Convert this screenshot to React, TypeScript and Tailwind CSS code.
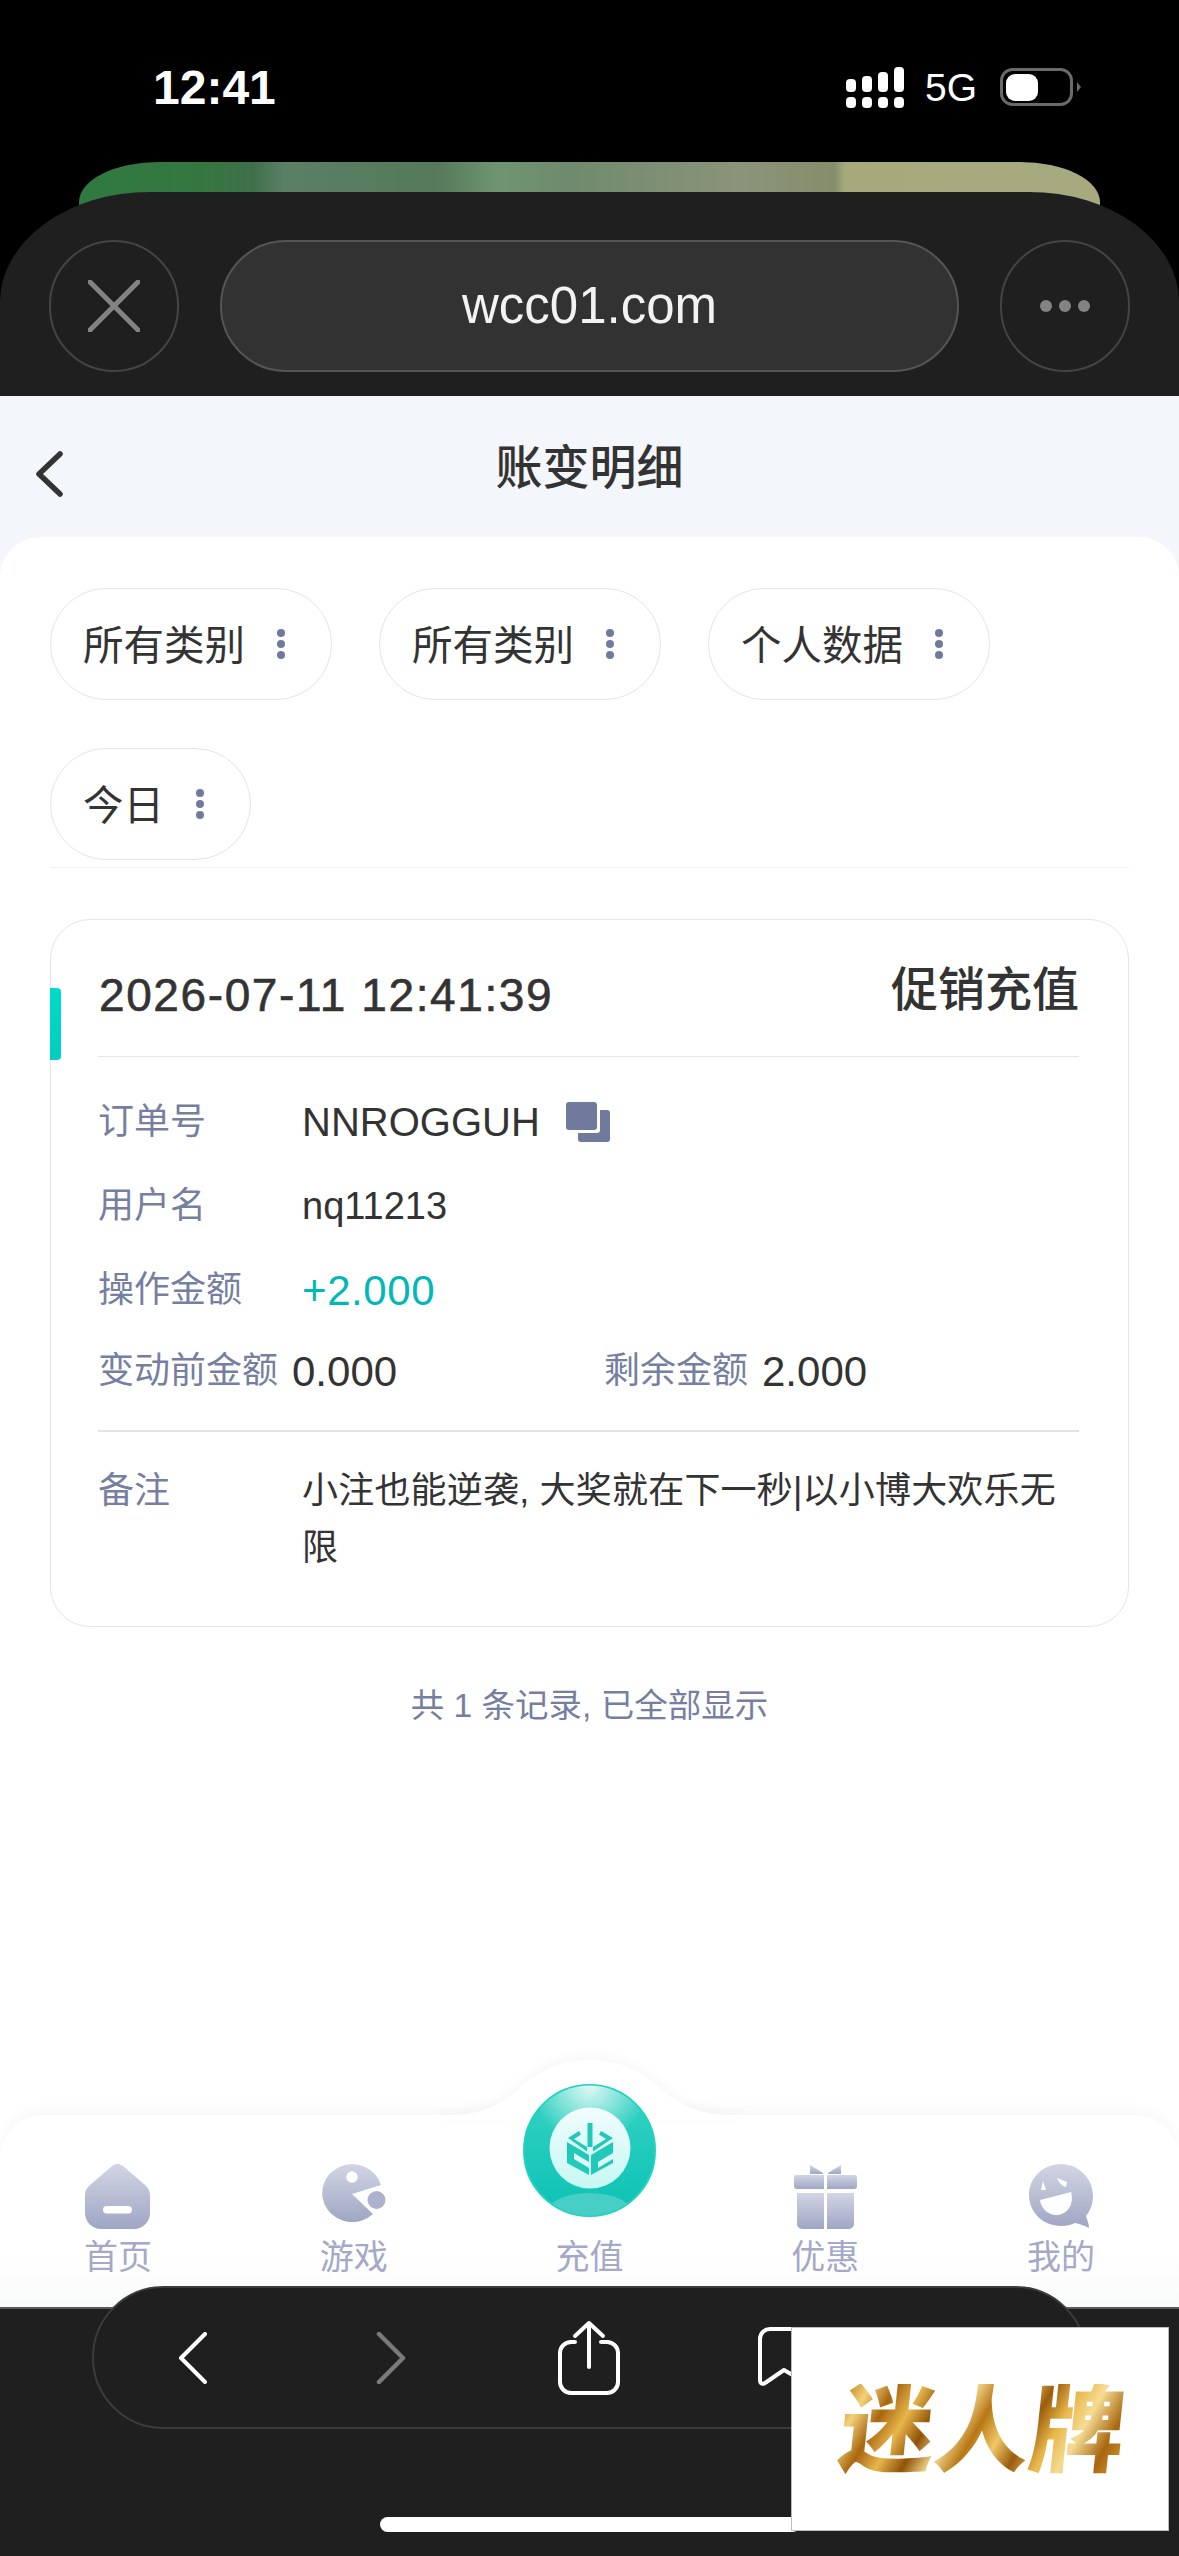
const navGradient = (id: string) => (
  <defs>
    <linearGradient id={id} x1="0" y1="0" x2="0" y2="1">
      <stop offset="0%" stopColor="#d2d5e4" />
      <stop offset="100%" stopColor="#9fa6c4" />
    </linearGradient>
  </defs>
);

// ---------------------------------------------------------------------------
// Icons
// ---------------------------------------------------------------------------

function SignalIcon() {
  return (
    <svg width="58" height="41" viewBox="0 0 58 41" fill="#fff">
      <rect x="0" y="12" width="10" height="13" rx="4" />
      <rect x="16" y="9" width="10" height="16" rx="4" />
      <rect x="32" y="5" width="10" height="20" rx="4" />
      <rect x="48" y="0" width="10" height="25" rx="4" />
      <rect x="0" y="30" width="10" height="11" rx="4" />
      <rect x="16" y="30" width="10" height="11" rx="4" />
      <rect x="32" y="30" width="10" height="11" rx="4" />
      <rect x="48" y="30" width="10" height="11" rx="4" />
    </svg>
  );
}

function BatteryIcon() {
  return (
    <svg width="81" height="38" viewBox="0 0 81 38">
      <rect x="1.5" y="1.5" width="70" height="35" rx="11" fill="none" stroke="#6a6a6a" strokeWidth="3" />
      <rect x="6" y="6" width="32" height="27" rx="9" fill="#fff" />
      <path d="M77 14 L81 19 L77 24 Z" fill="#6a6a6a" />
    </svg>
  );
}

function Dots() {
  return (
    <span className="flex flex-col gap-[3px]">
      <span className="w-[8px] h-[8px] rounded-full bg-[#6f7a9c]" />
      <span className="w-[8px] h-[8px] rounded-full bg-[#6f7a9c]" />
      <span className="w-[8px] h-[8px] rounded-full bg-[#6f7a9c]" />
    </span>
  );
}

function CopyIcon() {
  return (
    <svg width="44" height="40" viewBox="0 0 44 40" fill="#6f7a9c" className="ml-[26px]">
      <rect x="0" y="0" width="31" height="28" rx="3" />
      <path d="M34 8 H41 a3 3 0 0 1 3 3 V37 a3 3 0 0 1 -3 3 H15 a3 3 0 0 1 -3 -3 V31 H31 a3 3 0 0 0 3 -3 Z" />
    </svg>
  );
}

function HomeIcon() {
  return (
    <svg width="65" height="65" viewBox="0 0 65 65">
      {navGradient("navHome")}
      <path
        d="M27 2 a9 9 0 0 1 11 0 L60 21 a14 14 0 0 1 5 11 V49 a16 16 0 0 1 -16 16 H16 a16 16 0 0 1 -16 -16 V32 a14 14 0 0 1 5 -11 Z"
        fill="url(#navHome)"
      />
      <rect x="18" y="42" width="29" height="7.5" rx="3.7" fill="#fff" />
    </svg>
  );
}

function GameIcon() {
  return (
    <svg width="65" height="58" viewBox="0 0 65 58">
      {navGradient("navGame")}
      <path d="M31 30 L60 21 A30 29 0 1 0 52 50 Z" fill="url(#navGame)" />
      <circle cx="31" cy="13" r="5.8" fill="#fff" />
      <circle cx="55.5" cy="36" r="9" fill="#aeb3cd" />
    </svg>
  );
}

function GiftIcon() {
  return (
    <svg width="63" height="65" viewBox="0 0 63 65">
      {navGradient("navGift")}
      <g fill="url(#navGift)">
        <path d="M16 1 L29 9 V10 H16 Z M47 1 L34 9 V10 H47 Z" />
        <path d="M2 11 H30 V25 H3 a3 3 0 0 1 -3 -3 V13 a2 2 0 0 1 2 -2 Z M33 11 H61 a2 2 0 0 1 2 2 V22 a3 3 0 0 1 -3 3 H33 Z" />
        <path d="M3 29 H30 V65 H8 a5 5 0 0 1 -5 -5 Z M33 29 H60 V60 a5 5 0 0 1 -5 5 H33 Z" />
      </g>
    </svg>
  );
}

function FaceIcon() {
  return (
    <svg width="64" height="65" viewBox="0 0 64 65">
      {navGradient("navFace")}
      <path
        d="M32 0 C49 0 64 14 64 32 C64 40 61 47 57 52 C58 56 60 59 60 64 C54 61 50 60 46 59 C42 61 37 62 32 62 C14 62 0 48 0 31 C0 14 14 0 32 0 Z"
        fill="url(#navFace)"
      />
      <path d="M14 17 L12 26 L17 26 Z M28 14 L38 18 L37 23 C33 22 30 19 28 14 Z" fill="#fff" />
      <path d="M11 36 L42 28 C46 42 36 52 26 51 C18 50 12 44 11 36 Z" fill="#fff" />
    </svg>
  );
}

function RechargeBall() {
  return (
    <svg width="133" height="133" viewBox="0 0 133 133">
      <defs>
        <linearGradient id="ballBase" x1="0" y1="0" x2="0" y2="1">
          <stop offset="0%" stopColor="#35d3c3" />
          <stop offset="100%" stopColor="#0cc2b4" />
        </linearGradient>
        <radialGradient id="ballGlow" cx="50%" cy="0%" r="45%">
          <stop offset="0%" stopColor="#ffffff" stopOpacity="0.85" />
          <stop offset="100%" stopColor="#ffffff" stopOpacity="0" />
        </radialGradient>
        <linearGradient id="ballInner" x1="0" y1="0" x2="0" y2="1">
          <stop offset="0%" stopColor="#f1fdfc" />
          <stop offset="100%" stopColor="#c6f8f3" />
        </linearGradient>
        <clipPath id="ballClip">
          <circle cx="66.5" cy="66.5" r="65" />
        </clipPath>
      </defs>
      <circle cx="66.5" cy="66.5" r="65.5" fill="url(#ballBase)" stroke="#20d3bf" strokeWidth="2" />
      <circle cx="66.5" cy="66.5" r="65" fill="url(#ballGlow)" />
      <ellipse cx="66.5" cy="133" rx="46" ry="24" fill="#48cfc5" clipPath="url(#ballClip)" />
      <circle cx="67" cy="64" r="40.5" fill="url(#ballInner)" />
      <g fill="#22c9b9">
        <rect x="64.5" y="39" width="5" height="24" />
        <path d="M45 54 L56 47 L58 50.5 L51 55 L64 63 L64 67.5 Z" />
        <path d="M90 54 L78 47 L76 50.5 L83 55 L70 63 L70 67.5 Z" />
        <path d="M44 58 L66 71 V91 L44 79 Z" />
        <path d="M90 58 L68 71 V91 L90 79 Z" />
      </g>
      <g fill="#dcfbf8">
        <path d="M51 69 L66 78 V84 L51 75 Z" />
        <path d="M75 78 L90 69 V75 L75 84 Z" />
      </g>
    </svg>
  );
}

// ---------------------------------------------------------------------------
// Page
// ---------------------------------------------------------------------------

const FILTERS = ["所有类别", "所有类别", "个人数据", "今日"];

const NAV_ITEMS = [
  { label: "首页", icon: <HomeIcon /> },
  { label: "游戏", icon: <GameIcon /> },
  { label: "充值", icon: null },
  { label: "优惠", icon: <GiftIcon /> },
  { label: "我的", icon: <FaceIcon /> },
];

export default function App() {
  return (
    <div className="relative w-[1179px] h-[2556px] overflow-hidden bg-black flex flex-col font-['Liberation_Sans','Noto_Sans_CJK_SC',sans-serif]">
      {/* Status bar */}
      <div className="h-[162px] shrink-0 pt-[65px] pl-[153px] pr-[98px]">
        <div className="flex items-center justify-between h-[46px] text-white">
          <span className="text-[48px] font-bold leading-none">12:41</span>
          <div className="flex items-center -mt-[2px]">
            <SignalIcon />
            <span className="ml-[21px] mr-[23px] text-[39px] leading-none">5G</span>
            <BatteryIcon />
          </div>
        </div>
      </div>

      {/* Page peeking behind the browser header */}
      <div className="h-[44px] shrink-0 mx-[79px] rounded-t-[80px_40px] bg-[linear-gradient(90deg,#2f7a42_0%,#35763f_12%,#3f6f4a_17%,#5a7f63_20%,#55795a_35%,#6f9570_41%,#6f8a6e_48%,#8b9479_65%,#858d6b_74%,#a5a97c_75%,#a6aa7e_100%)]" />

      {/* Browser header */}
      <div className="relative -mt-[14px] h-[204px] shrink-0 bg-[#1f1f1f] rounded-tl-[150px_110px] rounded-tr-[150px_110px] flex items-center gap-[41px] px-[49px] pt-[24px]">
        <div className="w-[130px] h-[132px] shrink-0 rounded-full border-2 border-[#444] flex items-center justify-center">
          <svg width="52" height="52" viewBox="0 0 52 52" stroke="#838383" strokeWidth="5" strokeLinecap="round">
            <path d="M2 2 L50 50 M50 2 L2 50" />
          </svg>
        </div>
        <div className="flex-1 h-[132px] rounded-full border-2 border-[#555] bg-[#323232] flex items-center justify-center text-[51px] text-[#f2f2f2]">
          wcc01.com
        </div>
        <div className="w-[130px] h-[132px] shrink-0 rounded-full border-2 border-[#444] flex items-center justify-center gap-[7px]">
          <span className="w-[12px] h-[12px] rounded-full bg-[#838383]" />
          <span className="w-[12px] h-[12px] rounded-full bg-[#838383]" />
          <span className="w-[12px] h-[12px] rounded-full bg-[#838383]" />
        </div>
      </div>

      {/* Title bar */}
      <div className="h-[141px] shrink-0 bg-[#f3f6fb] grid grid-cols-[1fr_auto_1fr] items-center">
        <svg width="30" height="46" viewBox="0 0 30 46" fill="none" stroke="#333" strokeWidth="5.5" strokeLinecap="round" strokeLinejoin="round" className="ml-[34px] mt-[14px]">
          <path d="M26 3 L5 23 L26 43" />
        </svg>
        <div className="pt-[3px] text-[47px] font-medium text-[#333]">账变明细</div>
        <div />
      </div>

      {/* Panel */}
      <div className="flex-1 bg-[#f3f6fb]">
        <div className="h-full bg-white rounded-t-[40px] pt-[51px] px-[50px]">
          <div className="flex flex-wrap gap-x-[47px] gap-y-[48px]">
            {FILTERS.map((f, i) => (
              <div
                key={i}
                className="h-[112px] rounded-full border border-[#e3e4ec] pl-[32px] pr-[46px] flex items-center gap-[32px] text-[40.5px] text-[#333]"
              >
                <span className="pt-[4px]">{f}</span>
                <Dots />
              </div>
            ))}
          </div>
          <div className="mt-[7px] h-px bg-[#f0f1f5]" />

          {/* Record card */}
          <div className="relative mt-[51px] border border-[#e4e5ec] rounded-[40px] pl-[47px] pr-[49px] pb-[50px]">
            <div className="absolute -left-px top-[68px] w-[11px] h-[72px] rounded-r-[4px] bg-[linear-gradient(180deg,#00dcc8,#00cdbd)]" />
            <div className="h-[137px] pt-[14px] flex items-center justify-between border-b border-[#e4e5ec]">
              <span className="ml-[1px] text-[46px] font-medium tracking-[1.6px] text-[#333] [-webkit-text-stroke:0.6px_#333]">2026-07-11 12:41:39</span>
              <span className="text-[47px] font-medium text-[#333] -mt-[10px]">促销充值</span>
            </div>
            <div className="mt-[23px]">
              <div className="h-[84px] flex items-center">
                <span className="w-[204px] text-[36px] text-[#767f9f]">订单号</span>
                <span className="text-[40px] text-[#333]">NNROGGUH</span>
                <CopyIcon />
              </div>
              <div className="h-[84px] flex items-center">
                <span className="w-[204px] text-[36px] text-[#767f9f]">用户名</span>
                <span className="text-[38px] text-[#333]">nq11213</span>
              </div>
              <div className="h-[84px] flex items-center">
                <span className="w-[204px] text-[36px] text-[#767f9f]">操作金额</span>
                <span className="text-[42px] tracking-[0.6px] text-[#00b9b4]">+2.000</span>
              </div>
              <div className="h-[78px] flex items-center">
                <div className="w-[506px] flex items-center gap-[14px]">
                  <span className="text-[36px] text-[#767f9f]">变动前金额</span>
                  <span className="text-[42px] text-[#333]">0.000</span>
                </div>
                <div className="flex items-center gap-[14px]">
                  <span className="text-[36px] text-[#767f9f]">剩余金额</span>
                  <span className="text-[42px] text-[#333]">2.000</span>
                </div>
              </div>
            </div>
            <div className="mt-[20px] h-[2px] bg-[#e1e2ea]" />
            <div className="mt-[30px] flex">
              <span className="w-[204px] shrink-0 text-[36px] leading-[57px] text-[#767f9f]">备注</span>
              <span className="text-[36px] tracking-[0.2px] leading-[57px] text-[#333]">小注也能逆袭, 大奖就在下一秒|以小博大欢乐无限</span>
            </div>
          </div>

          <div className="mt-[56px] text-center text-[33.5px] leading-[46px] text-[#767f9f]">共 1 条记录, 已全部显示</div>
        </div>
      </div>

      {/* Tab bar */}
      <div className="relative h-[192px] shrink-0 bg-white">
        <div className="absolute inset-0 rounded-t-[44px] bg-[linear-gradient(180deg,#ffffff_70%,#f9fafa_100%)] shadow-[0_-6px_12px_rgba(0,0,0,0.03)]" />
        <svg width="300" height="70" viewBox="0 0 300 70" className="absolute left-[440px] -top-[65px] drop-shadow-[0_-4px_5px_rgba(0,0,0,0.03)]">
          <path d="M0 65 L10 65 C40 65 60 55 75 42 C100 18 125 10 150 10 C175 10 200 18 225 42 C240 55 260 65 290 65 L300 65 V70 H0 Z" fill="#fff" />
        </svg>
        <div className="absolute left-[523px] -top-[31px]">
          <RechargeBall />
        </div>
        <div className="relative grid grid-cols-5 pt-[49px]">
          {NAV_ITEMS.map((item) => (
            <div key={item.label} className="flex flex-col items-center">
              <div className="h-[65px] flex items-start">{item.icon}</div>
              <span className="mt-[5px] text-[34px] leading-[46px] text-[#a3a9c6]">{item.label}</span>
            </div>
          ))}
        </div>
      </div>

      {/* Browser toolbar */}
      <div className="relative h-[249px] shrink-0 bg-[#1f1f1f] border-t-2 border-[#5a5a5a]">
        <div className="absolute left-[92px] -top-[23px] w-[995px] h-[143px] rounded-full bg-[#1f1f1f] border-2 border-[#3c3c3c] grid grid-cols-5 items-center justify-items-center">
          <svg width="30" height="52" viewBox="0 0 30 52" fill="none" stroke="#fff" strokeWidth="4" strokeLinecap="round" strokeLinejoin="round">
            <path d="M27 2 L3 26 L27 50" />
          </svg>
          <svg width="30" height="52" viewBox="0 0 30 52" fill="none" stroke="#7a7a7a" strokeWidth="4.5" strokeLinecap="round" strokeLinejoin="round">
            <path d="M3 2 L27 26 L3 50" />
          </svg>
          <svg width="64" height="76" viewBox="0 0 64 76" fill="none" stroke="#fff" strokeWidth="4" strokeLinecap="round" strokeLinejoin="round">
            <path d="M18 22 H14 a11 11 0 0 0 -11 11 V62 a11 11 0 0 0 11 11 H50 a11 11 0 0 0 11 -11 V33 a11 11 0 0 0 -11 -11 H44" />
            <path d="M32 47 V3 M18 16 L32 3 L46 16" />
          </svg>
          <svg width="60" height="62" viewBox="0 0 60 62" fill="none" stroke="#fff" strokeWidth="4" strokeLinecap="round" strokeLinejoin="round" className="-translate-x-[2px]">
            <path d="M56 2 H14 a10 10 0 0 0 -10 10 V54 a3 3 0 0 0 5 2 L28 43 L40 50" />
          </svg>
          <div className="w-[60px] h-[60px] rounded-full border-4 border-white" />
        </div>

        {/* Home indicator */}
        <div className="absolute left-[380px] bottom-[24px] w-[420px] h-[15px] rounded-full bg-white" />

        {/* Watermark */}
        <div className="absolute left-[791px] top-[18px] w-[378px] h-[204px] bg-white border border-[#bdbdbd] flex items-center justify-center">
          <span className="inline-block ml-[6px] mt-[4px] -skew-x-[6deg] text-[95px] leading-none font-black text-transparent bg-clip-text bg-[linear-gradient(115deg,#b97a14_0%,#f3d27a_8%,#a8660f_16%,#e8b64a_24%,#8f5208_32%,#f5dc93_40%,#b87614_48%,#efc866_56%,#9a5c0c_64%,#e8b64a_72%,#f5dc93_80%,#a8660f_90%,#d9a235_100%)]">
            迷人牌
          </span>
        </div>
      </div>
    </div>
  );
}
